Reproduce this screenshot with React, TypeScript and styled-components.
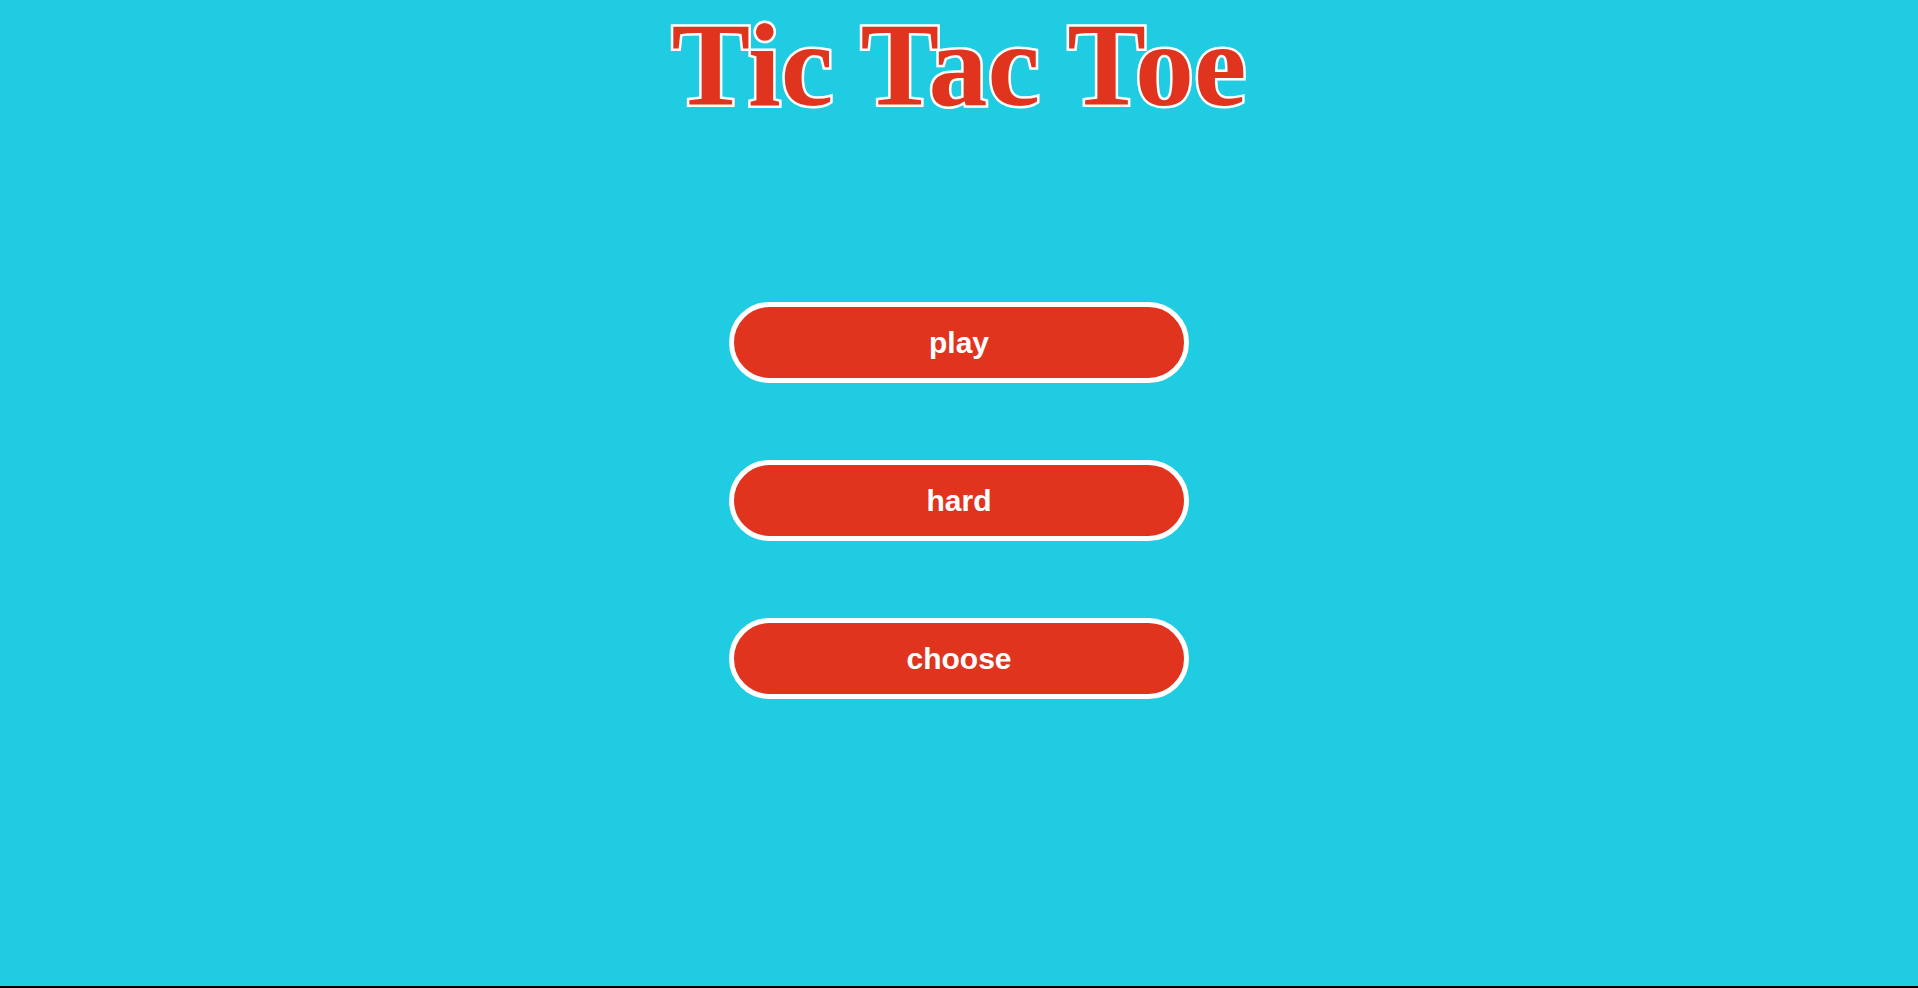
import React from "react";
import styled, { createGlobalStyle } from "styled-components";

const GlobalStyle = createGlobalStyle`
  html, body {
    margin: 0;
    padding: 0;
    background-color: #000000;
  }
`;

const Page = styled.div`
  height: calc(100vh - 2px);
  background-color: #20cce2;
  display: flex;
  flex-direction: column;
  align-items: center;
  overflow: hidden;
`;

// stroke painted under the fill so the white outline sits outside the red
const Title = styled.h1`
  margin: 0;
  font-family: "Liberation Serif", "Times New Roman", serif;
  font-size: 118px;
  font-weight: 700;
  line-height: 131px;
  color: #e0341f;
  -webkit-text-stroke: 5px #ffffff;
  paint-order: stroke fill;
`;

const Menu = styled.div`
  display: flex;
  flex-direction: column;
  align-items: center;
  gap: 77px;
  margin-top: 171px;
`;

const MenuButton = styled.button`
  width: 460px;
  height: 81px;
  padding: 0;
  border: 5px solid #ffffff;
  border-radius: 41px;
  background-color: #e0341f;
  color: #ffffff;
  font-family: "Liberation Sans", Arial, sans-serif;
  font-size: 30px;
  font-weight: 700;
  cursor: pointer;
  &:hover {
    transition: 0.3s;
    background-color: #e8553f;
  }
`;

const App: React.FC = () => {
  return (
    <>
      <GlobalStyle />
      <Page>
        <Title>Tic Tac Toe</Title>
        <Menu>
          <MenuButton>play</MenuButton>
          <MenuButton>hard</MenuButton>
          <MenuButton>choose</MenuButton>
        </Menu>
      </Page>
    </>
  );
};

export default App;
